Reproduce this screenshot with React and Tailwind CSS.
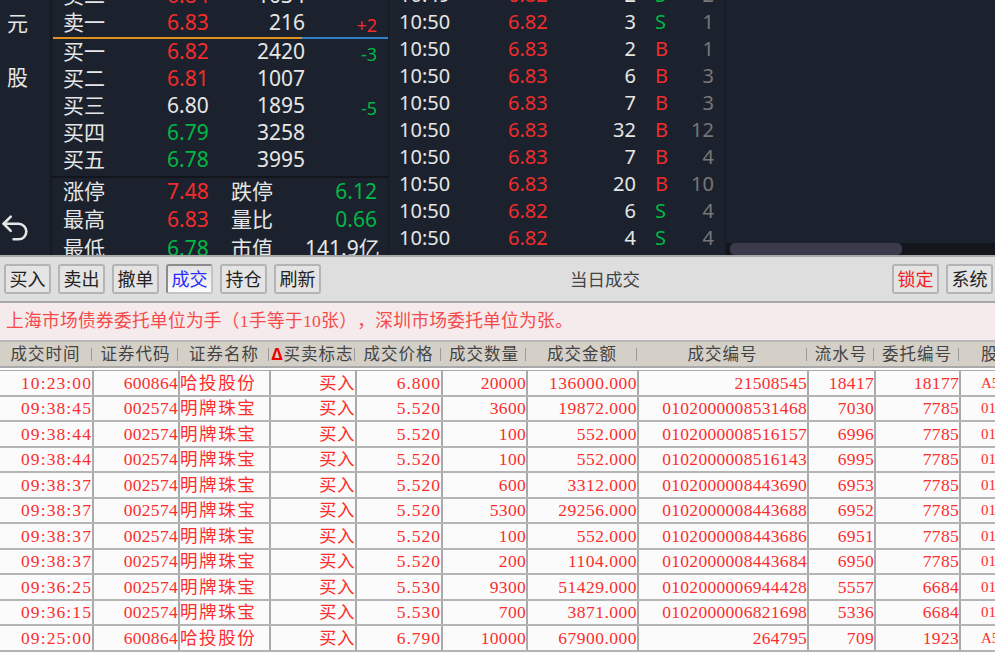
import React from "react";
import { Undo2 } from "lucide-react";

const red = "text-[#f22c2c]";
const green = "text-[#00b845]";
const white = "text-[#e6e6e6]";

const book = [
  ["卖二", "6.84", red, "1034", "", ""],
  ["卖一", "6.83", red, "216", "+2", red],
];
const buy = [
  ["买一", "6.82", red, "2420", "-3", green],
  ["买二", "6.81", red, "1007", "", ""],
  ["买三", "6.80", white, "1895", "-5", green],
  ["买四", "6.79", green, "3258", "", ""],
  ["买五", "6.78", green, "3995", "", ""],
];
const stats = [
  ["涨停", "7.48", red, "跌停", "6.12", green],
  ["最高", "6.83", red, "量比", "0.66", green],
  ["最低", "6.78", green, "市值", "141.9亿", white],
];
const ticks = [
  ["10:49", "6.82", "2", "S", "2"],
  ["10:50", "6.82", "3", "S", "1"],
  ["10:50", "6.83", "2", "B", "1"],
  ["10:50", "6.83", "6", "B", "3"],
  ["10:50", "6.83", "7", "B", "3"],
  ["10:50", "6.83", "32", "B", "12"],
  ["10:50", "6.83", "7", "B", "4"],
  ["10:50", "6.83", "20", "B", "10"],
  ["10:50", "6.82", "6", "S", "4"],
  ["10:50", "6.82", "4", "S", "4"],
];
const fills = [
  ["10:23:00", "600864", "哈投股份", "买入", "6.800", "20000", "136000.000", "21508545", "18417", "18177", "A5"],
  ["09:38:45", "002574", "明牌珠宝", "买入", "5.520", "3600", "19872.000", "0102000008531468", "7030", "7785", "01"],
  ["09:38:44", "002574", "明牌珠宝", "买入", "5.520", "100", "552.000", "0102000008516157", "6996", "7785", "01"],
  ["09:38:44", "002574", "明牌珠宝", "买入", "5.520", "100", "552.000", "0102000008516143", "6995", "7785", "01"],
  ["09:38:37", "002574", "明牌珠宝", "买入", "5.520", "600", "3312.000", "0102000008443690", "6953", "7785", "01"],
  ["09:38:37", "002574", "明牌珠宝", "买入", "5.520", "5300", "29256.000", "0102000008443688", "6952", "7785", "01"],
  ["09:38:37", "002574", "明牌珠宝", "买入", "5.520", "100", "552.000", "0102000008443686", "6951", "7785", "01"],
  ["09:38:37", "002574", "明牌珠宝", "买入", "5.520", "200", "1104.000", "0102000008443684", "6950", "7785", "01"],
  ["09:36:25", "002574", "明牌珠宝", "买入", "5.530", "9300", "51429.000", "0102000006944428", "5557", "6684", "01"],
  ["09:36:15", "002574", "明牌珠宝", "买入", "5.530", "700", "3871.000", "0102000006821698", "5336", "6684", "01"],
  ["09:25:00", "600864", "哈投股份", "买入", "6.790", "10000", "67900.000", "264795", "709", "1923", "A5"],
];
const heads = ["成交时间", "证券代码", "证券名称", "买卖标志", "成交价格", "成交数量", "成交金额", "成交编号", "流水号", "委托编号", "股"];

const cols = "grid grid-cols-[94px_86px_91px_86px_86px_85px_111px_170px_67px_85px_34px]";
const sans = "font-['Noto_Sans','Noto_Sans_CJK_SC',sans-serif]";
const serif = "font-['Liberation_Serif','Noto_Sans_CJK_SC',serif]";

// per column letter spacing for the fills table
const cellCls = [
  "justify-end border-r-2 tracking-[1.1px]",
  "justify-end border-r-2 tracking-[0.3px]",
  "justify-start border-r-2 tracking-[1.6px]",
  "justify-end border-r-2 tracking-[0.5px]",
  "justify-end border-r-2 tracking-[1px]",
  "justify-end border-r-2 tracking-[0.3px]",
  "justify-end border-r-2 tracking-[0.5px]",
  "justify-end border-r-2 tracking-[0.3px]",
  "justify-end border-r-2 tracking-[0.3px]",
  "justify-end border-r-2 tracking-[0.3px]",
  "justify-start pl-[20px] text-[15px]",
];

function BookRow({ r }) {
  return (
    <div className="flex h-[27px] items-center text-[21px] leading-none">
      <span className={`w-[115px] pl-[11px] ${white}`}>{r[0]}</span>
      <span className={`w-[68px] ${r[2]}`}>{r[1]}</span>
      <span className={`w-[70px] text-right ${white}`}>{r[3]}</span>
      <span className={`mt-[4px] w-[72px] text-right text-[18px] ${r[5]}`}>{r[4]}</span>
    </div>
  );
}

function Btn({ children, cls = "text-[#222]", on }) {
  return (
    <button
      className={`flex h-[30px] w-[47px] items-center justify-center rounded-[3px] border-2 text-[18px] leading-none ${
        on ? "border-[#8c8c8c] border-r-[#c4c4c4] border-b-[#c4c4c4] bg-gradient-to-b from-[#e2e2e2] to-[#fcfcfc]" : "border-[#b4b4b4] bg-[#e4e4e4]"
      } ${cls}`}
    >
      {children}
    </button>
  );
}

export default function App() {
  return (
    <div className={`flex h-[653px] w-[995px] flex-col overflow-hidden bg-white ${sans}`}>
      {/* quote panes */}
      <div className="flex h-[255px] shrink-0 overflow-hidden bg-[#1c222d]">
        <div className="flex w-[52px] shrink-0 flex-col border-r-2 border-[#151920] text-[21px] leading-none text-[#e6e6e6]">
          <span className="mt-[13px] pl-[7px]">元</span>
          <span className="mt-[33px] pl-[7px]">股</span>
          <Undo2 className="mt-[123px] -ml-[2px] shrink-0 text-[#e6e6e6]" size={34} strokeWidth={1.8} />
        </div>

        <div className="w-[336px] shrink-0">
          <div className="-mt-[18px]">
            {book.map((r) => <BookRow key={r[0]} r={r} />)}
          </div>
          <div className="mt-px ml-px flex h-[2px]">
            <div className="w-[249px] bg-[#e0921f]" />
            <div className="flex-1 bg-[#2f7fc9]" />
          </div>
          <div className="-mt-px">
            {buy.map((r) => <BookRow key={r[0]} r={r} />)}
          </div>
          <div className="mt-[3px] h-[2px] bg-[#12151b]" />
          <div className="-mt-px">
            {stats.map((r) => (
              <div key={r[0]} className="flex h-[28.5px] items-center text-[21px] leading-none">
                <span className={`w-[115px] pl-[11px] ${white}`}>{r[0]}</span>
                <span className={`w-[64px] ${r[2]}`}>{r[1]}</span>
                <span className={`w-[74px] ${white}`}>{r[3]}</span>
                <span className={`w-[72px] text-right whitespace-nowrap ${r[5]}`}>{r[4]}</span>
              </div>
            ))}
          </div>
        </div>

        <div className="-mt-[19px] w-[338px] shrink-0 border-x border-[#151920]">
          {ticks.map((t, i) => (
            <div key={i} className="flex h-[27px] items-center text-[20px] leading-none">
              <span className={`w-[119px] pl-[10px] ${white}`}>{t[0]}</span>
              <span className={`w-[69px] ${red}`}>{t[1]}</span>
              <span className={`w-[59px] text-right ${white}`}>{t[2]}</span>
              <span className={`w-[31px] pl-[19px] ${t[3] === "S" ? green : red}`}>{t[3]}</span>
              <span className="w-[47px] text-right text-[#777]">{t[4]}</span>
            </div>
          ))}
        </div>

        <div className="flex flex-1 flex-col justify-end">
          <div className="h-[12px] bg-[#14161d] pl-[4px]">
            <div className="h-[12px] w-[172px] rounded-[5px] bg-[#3c3b4c]" />
          </div>
        </div>
      </div>

      {/* toolbar */}
      <div className="flex h-[48px] shrink-0 items-center gap-[7px] border-y-2 border-y-[#a8a8a8] bg-[#dedede] pl-[4px] pr-[2px]">
        <Btn>买入</Btn>
        <Btn>卖出</Btn>
        <Btn>撤单</Btn>
        <Btn on cls="text-[#2a2aff]">成交</Btn>
        <Btn>持仓</Btn>
        <Btn>刷新</Btn>
        <span className="flex-1 pr-[3px] text-center text-[17.5px] text-[#444]">当日成交</span>
        <Btn cls="text-[#f02020]">锁定</Btn>
        <Btn>系统</Btn>
      </div>

      {/* notice */}
      <div className={`flex h-[37px] shrink-0 items-center whitespace-nowrap bg-[#f5eaec] pl-[6px] text-[17.7px] tracking-[0.3px] text-[#f54b4b] [text-spacing-trim:space-all] ${serif}`}>
        上海市场债券委托单位为手（1手等于10张），深圳市场委托单位为张。
      </div>

      {/* fills table */}
      <div className="flex-1 overflow-hidden border-t-2 border-[#b8b8b8] bg-[#fbfbfb]">
        <div className={`${cols} h-[24px] bg-[#d4d0c8] text-[16.5px] leading-none text-[#444]`}>
          {heads.map((h, i) => (
            <div key={h} className={`relative flex items-center overflow-hidden whitespace-nowrap tracking-[1px] ${i === 10 ? "justify-start pl-[20px]" : "justify-center pr-[3px]"}`}>
              {i === 3 && <span className="font-bold text-[#f00000]">Δ</span>}
              {h}
              {i < 10 && <span className="absolute right-[2px] top-[6px] h-[13px] w-px bg-[#999]" />}
            </div>
          ))}
        </div>
        <div className="h-[4px] border-y-2 border-t-[#aaa] border-b-[#fff]" />
        <div className="h-px bg-[#aaa]" />
        {fills.map((r, i) => (
          <div key={i} className={`${cols} h-[25.5px] border-b-2 border-[#b4b4b4] text-[17.5px] leading-none text-[#fb2e2e] ${serif}`}>
            {r.map((c, j) => (
              <div
                key={j}
                className={`flex items-center overflow-hidden whitespace-nowrap border-[#aaa] pt-px ${cellCls[j]}`}
              >
                {c}
              </div>
            ))}
          </div>
        ))}
      </div>
    </div>
  );
}
